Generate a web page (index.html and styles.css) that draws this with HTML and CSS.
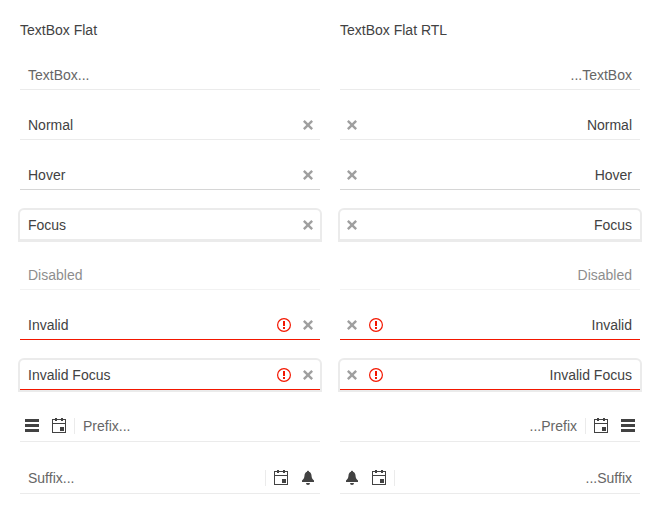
FILE: index.html
```
<!DOCTYPE html>
<html lang="en">
<head>
<meta charset="utf-8">
<title>TextBox Flat</title>
<link rel="stylesheet" href="styles.css">
</head>
<body>
<svg class="sprite" aria-hidden="true">
  <symbol id="x" viewBox="0 0 16 16"><path d="M13 4.700 9.700 8 13 11.300 11.300 13 8 9.700 4.700 13 3 11.300 6.300 8 3 4.700 4.700 3 8 6.300 11.300 3z"/></symbol>
  <symbol id="warn" viewBox="0 0 16 16"><circle cx="8" cy="8" r="6.400" fill="none" stroke="currentColor" stroke-width="1.200"/><path d="M7 4h2v5H7zM7 10h2v2H7z" shape-rendering="crispEdges"/></symbol>
  <symbol id="menu" viewBox="0 0 16 16"><path shape-rendering="crispEdges" d="M1 1h14v3H1zM1 6h14v3H1zM1 11h14v3H1z"/></symbol>
  <symbol id="cal" viewBox="0 0 16 16"><path shape-rendering="crispEdges" fill-rule="evenodd" d="M4 0h2v1h4V0h2v1h3v14H1V1h3zM2 2v3h12V2h-2v1h-2V2H6v1H4V2zM2 6v8h12V6zM9 9h4v4H9z"/></symbol>
  <symbol id="bell" viewBox="0 0 16 16"><path d="M8 .7C7.400.700 7 1.100 7 1.700 5.400 2.200 4.600 3.700 4.500 5.500 4.300 8 3.600 9.300 2 10.600V12h12v-1.400c-1.600-1.300-2.300-2.600-2.500-5.100-.1-1.800-.9-3.300-2.500-3.800 0-.6-.4-1-1-1zM6 13a2 2 0 0 0 4 0z"/></symbol>
</svg>
<main class="columns">
  <section class="column">
    <h1>TextBox Flat</h1>
    <div class="box"><span class="value placeholder">TextBox...</span></div>
    <div class="box"><span class="value">Normal</span><svg class="icon clear"><use href="#x"/></svg></div>
    <div class="box hover"><span class="value">Hover</span><svg class="icon clear"><use href="#x"/></svg></div>
    <div class="box focus"><span class="value">Focus</span><svg class="icon clear"><use href="#x"/></svg></div>
    <div class="box disabled"><span class="value">Disabled</span></div>
    <div class="box invalid"><span class="value">Invalid</span><svg class="icon error"><use href="#warn"/></svg><svg class="icon clear"><use href="#x"/></svg></div>
    <div class="box invalid focus"><span class="value">Invalid Focus</span><svg class="icon error"><use href="#warn"/></svg><svg class="icon clear"><use href="#x"/></svg></div>
    <div class="box adorned"><svg class="icon"><use href="#menu"/></svg><svg class="icon"><use href="#cal"/></svg><i class="separator"></i><span class="value placeholder">Prefix...</span></div>
    <div class="box adorned"><span class="value placeholder">Suffix...</span><i class="separator"></i><svg class="icon"><use href="#cal"/></svg><svg class="icon"><use href="#bell"/></svg></div>
  </section>
  <section class="column">
    <h1>TextBox Flat RTL</h1>
    <div class="box" dir="rtl"><span class="value placeholder">TextBox...</span></div>
    <div class="box" dir="rtl"><span class="value">Normal</span><svg class="icon clear"><use href="#x"/></svg></div>
    <div class="box hover" dir="rtl"><span class="value">Hover</span><svg class="icon clear"><use href="#x"/></svg></div>
    <div class="box focus" dir="rtl"><span class="value">Focus</span><svg class="icon clear"><use href="#x"/></svg></div>
    <div class="box disabled" dir="rtl"><span class="value">Disabled</span></div>
    <div class="box invalid" dir="rtl"><span class="value">Invalid</span><svg class="icon error"><use href="#warn"/></svg><svg class="icon clear"><use href="#x"/></svg></div>
    <div class="box invalid focus" dir="rtl"><span class="value">Invalid Focus</span><svg class="icon error"><use href="#warn"/></svg><svg class="icon clear"><use href="#x"/></svg></div>
    <div class="box adorned" dir="rtl"><svg class="icon"><use href="#menu"/></svg><svg class="icon"><use href="#cal"/></svg><i class="separator"></i><span class="value placeholder">Prefix...</span></div>
    <div class="box adorned" dir="rtl"><span class="value placeholder">Suffix...</span><i class="separator"></i><svg class="icon"><use href="#cal"/></svg><svg class="icon"><use href="#bell"/></svg></div>
  </section>
</main>
</body>
</html>
```
FILE: styles.css
```
* {
  box-sizing: border-box;
}

body {
  margin: 0;
  background: #fff;
  color: #424242;
  font: 14px/20px "Liberation Sans", Arial, sans-serif;
}

.sprite {
  display: none;
}

.columns {
  display: grid;
  grid-template-columns: 300px 300px;
  gap: 20px;
  padding: 20px;
}

.column {
  display: flex;
  flex-direction: column;
  gap: 20px;
}

h1 {
  margin: 0;
  font: inherit;
}

.box {
  display: flex;
  align-items: flex-start;
  height: 30px;
  border-bottom: 1px solid #ebebeb;
}

.value {
  flex: 1;
  padding: 5px 8px;
}

.placeholder {
  color: #666;
}

.icon {
  flex: none;
  width: 24px;
  height: 24px;
  padding: 4px;
  margin-top: 3px;
  fill: currentColor;
}

.clear {
  opacity: 0.5;
}

.error {
  color: #f31700;
}

.separator {
  width: 1px;
  height: 16px;
  margin-top: 8px;
  background: #ebebeb;
}

.hover {
  border-color: #d6d6d6;
}

.focus {
  border-radius: 4px 4px 0 0;
  box-shadow: 0 0 0 2px #ebebeb;
}

.disabled {
  opacity: 0.6;
}

.invalid {
  border-color: #f31700;
}

.adorned {
  height: 32px;
  gap: 3px;
}

.adorned .icon {
  margin-top: 4px;
}

.adorned .value {
  padding-top: 6px;
}

.separator + .value {
  margin-inline-start: -3px;
}
```
